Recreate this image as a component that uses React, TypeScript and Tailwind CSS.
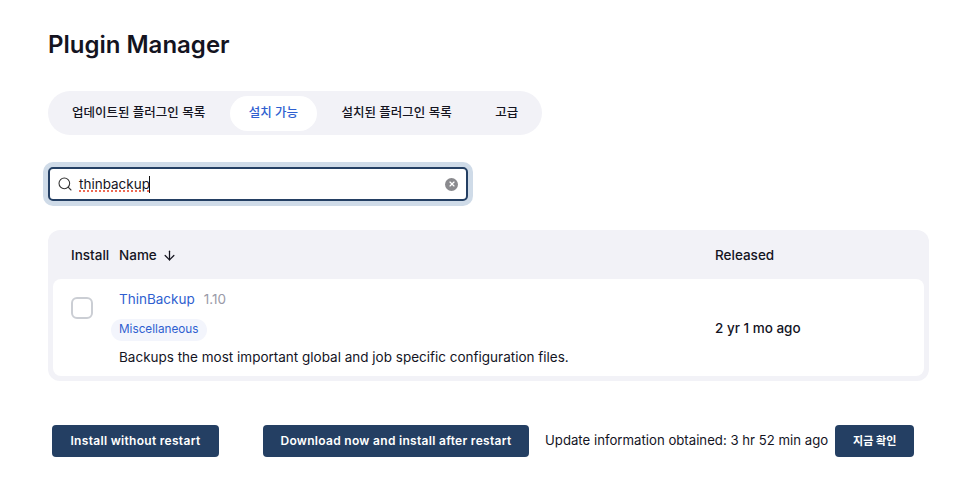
import { Search, ArrowDown, X } from "lucide-react"

const tabs = [
	{ label: "업데이트된 플러그인 목록", active: false },
	{ label: "설치 가능", active: true },
	{ label: "설치된 플러그인 목록", active: false },
	{ label: "고급", active: false },
]

const Button = ({ children, className = "" }: { children: React.ReactNode; className?: string }) => (
	<button className={`h-8 rounded-[4px] bg-[#243f63] text-white font-semibold leading-none whitespace-nowrap ${className}`}>
		{children}
	</button>
)

const App = () => {
	return (
		<div className="w-[957px] h-[483px] bg-white overflow-hidden pl-12 pt-[31px] text-[#14141f] font-['Inter','Noto_Sans_CJK_KR',sans-serif]">
			<h1 className="text-[24px] leading-[27px] font-semibold">Plugin Manager</h1>

			<div className="mt-[33px] w-[494px] h-11 rounded-[22px] bg-[#f2f2f7] flex items-center gap-[5.5px] pl-[5px] text-[12.5px] font-medium">
				{tabs.map((tab) => (
					<div
						key={tab.label}
						className={`h-[35px] pt-px flex items-center rounded-[18px] px-[19px] whitespace-nowrap ${tab.active ? "bg-white text-[#2f5fd0]" : ""}`}
					>
						{tab.label}
					</div>
				))}
			</div>

			<div className="mt-[32px] w-[420px] h-[34px] rounded-[5px] bg-white border-2 border-[#243f63] ring-[5px] ring-[#cfdbe8] flex items-center pl-[7px] pr-[8px]">
				<Search size={16} strokeWidth={1.6} className="text-[#333] shrink-0" />
				<span className="ml-[6px] text-[13.5px] underline decoration-dotted decoration-[#ee6a55] decoration-2 underline-offset-[2px]">thinbackup</span>
				<span className="-ml-px w-px h-[17px] bg-[#111]"></span>
				<span className="ml-auto w-[13px] h-[13px] rounded-full bg-[#8a8a8e] flex items-center justify-center">
					<X size={8} strokeWidth={3.5} className="text-white" />
				</span>
			</div>

			<div className="mt-[29px] w-[881px] h-[151px] rounded-[12px] bg-[#f2f2f7] px-[5px] pb-[5px] flex flex-col">
				<div className="h-[49px] pt-px shrink-0 flex items-center text-[13.5px] font-medium">
					<span className="ml-[18px] w-12">Install</span>
					<span className="flex items-center gap-[5px] w-[596px]">
						Name <ArrowDown size={15} strokeWidth={2} />
					</span>
					<span>Released</span>
				</div>
				<div className="flex-1 rounded-[8px] bg-white flex">
					<div className="w-[66px] pl-[18px] pt-[18px] shrink-0">
						<div className="w-[22px] h-[22px] rounded-[6px] border-2 border-[#cbced4] bg-white"></div>
					</div>
					<div className="w-[596px] shrink-0 pt-[11px] text-[13.5px]">
						<div className="flex items-baseline gap-[9px] leading-[18px]">
							<a className="text-[#2f5fd0]">ThinBackup</a>
							<span className="text-[#9a9aa8]">1.10</span>
						</div>
						<div className="mt-[11px] -ml-2 w-fit h-[22px] flex items-center rounded-[11px] bg-[#f3f5fc] px-2 text-[11.75px] text-[#2f5fd0]">Miscellaneous</div>
						<p className="mt-[8px] leading-4">Backups the most important global and job specific configuration files.</p>
					</div>
					<div className="flex items-center text-[13.5px] font-medium pt-px">2 yr 1 mo ago</div>
				</div>
			</div>

			<div className="mt-[44px] flex items-center pl-1">
				<Button className="w-[167px] text-[12px] tracking-[0.3px]">Install without restart</Button>
				<Button className="ml-11 w-[266px] text-[12px] tracking-[0.3px]">Download now and install after restart</Button>
				<span className="ml-4 text-[13.2px] whitespace-nowrap">Update information obtained: 3 hr 52 min ago</span>
				<Button className="ml-[7px] w-[79px] text-[11px]">지금 확인</Button>
			</div>
		</div>
	)
}

export default App
